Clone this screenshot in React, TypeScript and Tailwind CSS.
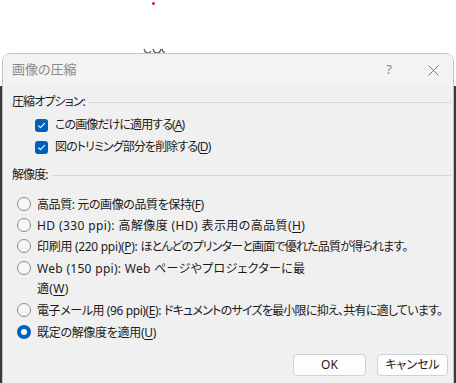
import React from 'react';

const font = "font-['Noto_Sans','Noto_Sans_CJK_JP',sans-serif] [font-feature-settings:'palt']";

const Key = ({ k }: { k: string }) => (
  <>
    (<span className="underline underline-offset-2">{k}</span>)
  </>
);

const Checkbox = () => (
  <span className="flex h-[13px] w-[13px] items-center justify-center rounded-[3px] bg-[#005fb8]">
    <svg width="9" height="9" viewBox="0 0 9 9" fill="none">
      <path d="M1.5 4.8 L3.5 6.6 L7.5 2.4" stroke="#ffffff" strokeWidth="1.1" strokeLinecap="round" strokeLinejoin="round" />
    </svg>
  </span>
);

const Radio = ({ checked }: { checked?: boolean }) =>
  checked ? (
    <span className="flex h-[14px] w-[14px] shrink-0 items-center justify-center rounded-full bg-[#005fb8]">
      <span className="h-[6px] w-[6px] rounded-full bg-white" />
    </span>
  ) : (
    <span className="h-[14px] w-[14px] shrink-0 rounded-full border border-[#8a8a8a] bg-[#f6f6f6]" />
  );

const GroupLabel = ({ text }: { text: string }) => (
  <div className="flex h-4 items-center gap-[4px] pl-[9px] pr-[2px]">
    <span className="whitespace-nowrap tracking-[-0.9px]">{text}</span>
    <div className="h-px flex-1 bg-[#d6d6d6]" />
  </div>
);

const resolutions = [
  { label: <>高品質: 元の画像の品質を保持<Key k="F" /></>, h: 'h-[21px]', tr: 'tracking-[-0.4px]' },
  { label: <>HD (330 ppi): 高解像度 (HD) 表示用の高品質<Key k="H" /></>, h: 'h-[21px]', tr: 'tracking-[0.4px]' },
  {
    label: (
      <>
        印刷用 (220 ppi)<Key k="P" />: <span className="tracking-[-0.8px]">ほとんどのプリンターと画面で優れた品質が得られます。</span>
      </>
    ),
    h: 'h-[22px]',
    tr: 'tracking-[-0.3px]',
  },
  { label: <>Web (150 ppi): Web ページやプロジェクターに最<br />適<Key k="W" /></>, h: 'h-[42px]', tr: 'tracking-[0.3px]' },
  {
    label: (
      <>
        電子メール用 (96 ppi)<Key k="E" />: <span className="tracking-[-0.75px]">ドキュメントのサイズを最小限に抑え、共有に適しています。</span>
      </>
    ),
    h: 'h-[22px]',
    tr: 'tracking-[-0.4px]',
  },
  { label: <>既定の解像度を適用<Key k="U" /></>, h: 'h-[22px]', tr: 'tracking-[-0.3px]', checked: true },
];

export default function App() {
  return (
    <div className={`relative h-[383px] w-[456px] overflow-hidden bg-white text-[12px] text-[#1b1b1b] ${font}`}>
      {/* background behind the dialog */}
      <div className="flex h-full flex-col">
        <div className="h-[86px] bg-white" />
        <div className="flex-1 bg-[#3a3a3a]" />
      </div>
      <span className="absolute left-[152px] top-[2px] h-[3px] w-[3px] rounded-full bg-[#e81123]" />
      <svg className="absolute left-[143px] top-[48px]" width="24" height="7" viewBox="0 0 24 7" fill="none">
        <path d="M1 1 Q2 5 5 5 Q7 5 8 3 M10 1 Q11 5 14 5 Q17 5 18 1 M19 1 Q20 5 22 4" stroke="#555" strokeWidth="1.2" />
      </svg>

      {/* dialog */}
      <div className="absolute left-[2px] top-[53px] flex h-[340px] w-[452px] flex-col overflow-hidden rounded-t-[8px] border border-[#c4c4c4] bg-[#f0f0f0]">
        <div className="flex h-[32px] shrink-0 items-center bg-[#f3f3f3] pl-[9px] pr-[14px]">
          <span className="text-[13px] text-[#8a8a8a]">画像の圧縮</span>
          <span className="ml-auto mr-[36px] text-[13px] text-[#8a8a8a]">?</span>
          <svg width="11" height="11" viewBox="0 0 11 11">
            <path d="M0.5 0.5 L10.5 10.5 M10.5 0.5 L0.5 10.5" stroke="#7a7a7a" strokeWidth="1" />
          </svg>
        </div>

        <div className="flex flex-col pt-[8px]">
          <GroupLabel text="圧縮オプション:" />
          <div className="mt-[4px] flex flex-col pl-[32px]">
            {[
              <>この画像だけに適用する<Key k="A" /></>,
              <>図のトリミング部分を削除する<Key k="D" /></>,
            ].map((t, i) => (
              <div key={i} className="flex h-[22px] items-center gap-[7px]">
                <Checkbox />
                <span className="whitespace-nowrap tracking-[-0.9px]">{t}</span>
              </div>
            ))}
          </div>

          <div className="mt-[9px]">
            <GroupLabel text="解像度:" />
          </div>

          <div className="mt-[10px] flex flex-col pl-[14px]">
            {resolutions.map((r, i) => (
              <div key={i} className={`flex ${r.h} items-start gap-[6px]`}>
                <div className="flex h-[21px] items-center">
                  <Radio checked={r.checked} />
                </div>
                <span className={`whitespace-nowrap pt-[2px] leading-[20px] ${r.tr}`}>{r.label}</span>
              </div>
            ))}
          </div>

          <div className="mt-[11px] flex justify-end gap-[11px] pr-[5px]">
            <button className="flex h-[22px] w-[73px] items-center justify-center rounded-[4px] border border-[#d0d0d0] bg-[#fdfdfd]">
              OK
            </button>
            <button className="flex h-[22px] w-[71px] items-center justify-center rounded-[4px] border border-[#d0d0d0] bg-[#fdfdfd]">
              キャンセル
            </button>
          </div>
        </div>
      </div>
    </div>
  );
}
